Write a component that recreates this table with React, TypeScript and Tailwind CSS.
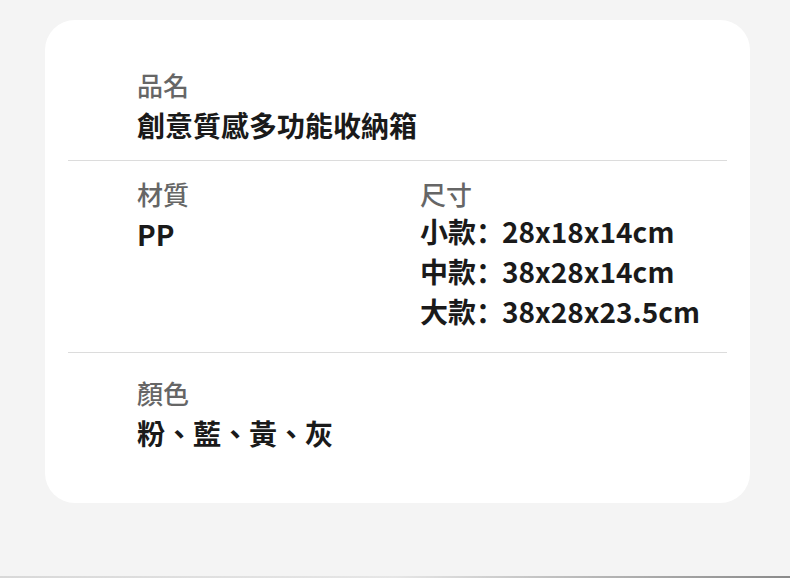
import React from 'react';

const font = { fontFamily: '"Noto Sans CJK TC", "Noto Sans", sans-serif' };

function Label({ children }: { children: React.ReactNode }) {
  return <div className="text-[26px] leading-[40px] font-medium text-[#666]">{children}</div>;
}

function Value({ children }: { children: React.ReactNode }) {
  return <div className="text-[28px] leading-[40px] font-bold text-[#1a1a1a]">{children}</div>;
}

// colon sits left in its cell, as in the SC forms
function Colon() {
  return <span className="mr-[-2px]" style={{ fontFamily: '"Noto Sans CJK SC", sans-serif' }}>：</span>;
}

export default function App() {
  return (
    <div className="w-[790px] h-[578px] bg-[#f4f4f4] flex flex-col" style={font}>
      <div className="ml-[45px] mt-[20px] w-[705px] h-[483px] bg-white rounded-[30px] px-[23px]">
        <div className="pl-[69px] pt-[45px] pb-[15px]">
          <Label>品名</Label>
          <Value>創意質感多功能收納箱</Value>
        </div>
        <div className="h-px bg-[#dcdcdc]" />
        <div className="pl-[69px] pt-[13px] pb-[18px] flex">
          <div className="w-[283px]">
            <Label>材質</Label>
            <Value>PP</Value>
          </div>
          <div>
            <Label>尺寸</Label>
            <div className="-mt-[3px] pb-[3px]">
              <Value>小款<Colon />28x18x14cm</Value>
              <Value>中款<Colon />38x28x14cm</Value>
              <Value>大款<Colon />38x28x23.5cm</Value>
            </div>
          </div>
        </div>
        <div className="h-px bg-[#dcdcdc]" />
        <div className="pl-[69px] pt-[20px]">
          <Label>顏色</Label>
          <Value>粉、藍、黃、灰</Value>
        </div>
      </div>
      <div className="mt-auto h-[2px] bg-gradient-to-r from-[#d8d8d8] via-[#e6e6e6] to-[#8a8a8a]" />
    </div>
  );
}
